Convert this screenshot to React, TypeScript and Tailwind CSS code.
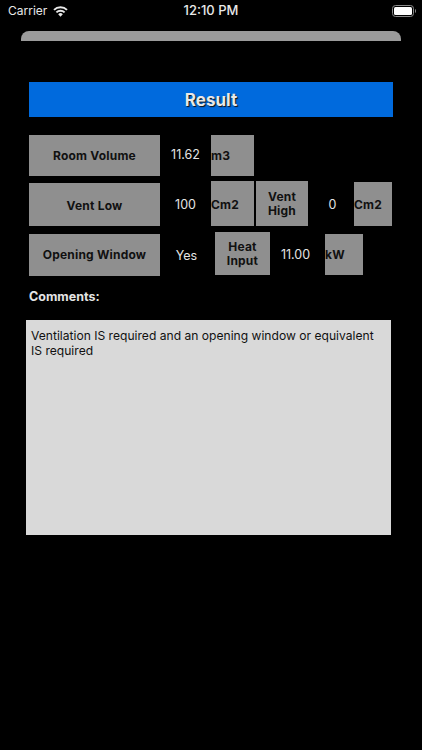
import React from "react";

function GreyBox({ className, children }: { className: string; children: React.ReactNode }) {
	return (
		<div className={"flex items-center bg-[#8f8f8f] text-[12px] leading-[14px] font-bold tracking-[0.2px] text-[#111] " + className}>
			{children}
		</div>
	);
}

function Value({ className, children }: { className: string; children: React.ReactNode }) {
	return <div className={"text-center text-[12.5px] text-[#e4e4e4] " + className}>{children}</div>;
}

export default function App() {
	return (
		<div className="h-[750px] w-[422px] overflow-hidden bg-black font-['Inter',sans-serif]">
			<div className="grid h-[22px] grid-cols-3 items-center px-2 text-[#e8e8e8]">
				<div className="flex items-center gap-[6px] text-[12px]">
					<span>Carrier</span>
					<svg width="15" height="11" viewBox="0 0 15 11" fill="none" stroke="currentColor" strokeWidth="1.9">
						<path d="M1 3.9a9.2 9.2 0 0 1 13 0" />
						<path d="M3.4 6.4a5.800 5.800 0 0 1 8.200 0" />
						<path d="M7.500 10.700l2.300-2.400a3.200 3.200 0 0 0-4.600 0z" fill="currentColor" stroke="none" />
					</svg>
				</div>
				<div className="text-center text-[13px] font-medium">12:10 PM</div>
				<div className="mr-[-2px] flex justify-end">
					<svg width="24" height="12" viewBox="0 0 24 12">
						<rect x="0.5" y="0.5" width="21" height="11" rx="3" fill="none" stroke="#8a8a8a" />
						<rect x="2" y="2" width="18" height="8" rx="1.5" fill="#fff" />
						<path d="M23 4v4c.6-.2 1-1 1-2s-.4-2-1-2z" fill="#8a8a8a" />
					</svg>
				</div>
			</div>

			<div className="mx-[21px] mt-[9px] h-[10px] w-[380px] rounded-t-[8px] bg-[#9b9b9b]" />

			<div className="mx-[29px] mt-[41px] flex h-[35px] w-[364px] items-center justify-center bg-[#006add] pt-[2px] text-[17px] font-bold text-[#e8e8e8] [text-shadow:1px_1px_1px_#111]">
				Result
			</div>

			<div className="mt-[18px] ml-[29px] flex h-[41px] items-center">
				<GreyBox className="h-full w-[131px] justify-center">Room Volume</GreyBox>
				<Value className="w-[51px]">11.62</Value>
				<GreyBox className="h-full w-[43px]">m3</GreyBox>
			</div>

			<div className="mt-[5px] ml-[29px] flex h-[45px] items-center">
				<GreyBox className="mt-[2px] h-[43px] w-[131px] justify-center pt-[2px]">Vent Low</GreyBox>
				<Value className="mt-[3px] w-[51px]">100</Value>
				<GreyBox className="h-full w-[43px] pt-[2px]">Cm2</GreyBox>
				<GreyBox className="ml-[2px] h-full w-[52px] justify-center pt-[1px] text-center">
					Vent
					<br />
					High
				</GreyBox>
				<Value className="mt-[3px] ml-[1px] w-[47px]">0</Value>
				<GreyBox className="mt-[1px] ml-[-2px] h-[44px] w-[38px] pt-[1px]">Cm2</GreyBox>
			</div>

			<div className="mt-[6px] ml-[29px] flex h-[44px] items-start">
				<GreyBox className="mt-[2px] h-[42px] w-[131px] justify-center">Opening Window</GreyBox>
				<Value className="mt-[15px] w-[53px]">Yes</Value>
				<GreyBox className="ml-[2px] h-[43px] w-[55px] justify-center pt-[1px] text-center">
					Heat
					<br />
					Input
				</GreyBox>
				<Value className="mt-[14px] w-[51px]">11.00</Value>
				<GreyBox className="mt-[2px] ml-[4px] h-[41px] w-[38px]">kW</GreyBox>
			</div>

			<div className="mt-[13px] ml-[29px] text-[12.5px] leading-[16px] font-bold text-[#e4e4e4]">Comments:</div>

			<div className="mt-[15px] ml-[26px] h-[215px] w-[365px] bg-[#d9d9d9] px-[5px] py-[8px] text-[12.1px] leading-[15px] text-[#111]">
				Ventilation IS required and an opening window or equivalent IS required
			</div>
		</div>
	);
}
